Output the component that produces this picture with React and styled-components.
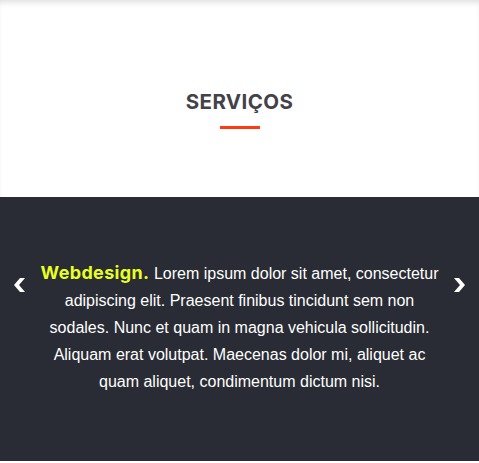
import React from "react";
import styled, { createGlobalStyle } from "styled-components";

const GlobalStyle = createGlobalStyle`
  html, body {
    margin: 0;
    padding: 0;
    background: #ffffff;
  }
  body {
    font-family: "Liberation Sans", Arial, sans-serif;
  }
`;

const Page = styled.div`
  width: 479px;
  height: 463px;
  display: flex;
  flex-direction: column;
`;

const Header = styled.section`
  height: 197px;
  display: flex;
  flex-direction: column;
  align-items: center;
  justify-content: center;
  padding-top: 22px;
  box-sizing: border-box;
  box-shadow: inset 0 5px 6px -3px rgba(0, 0, 0, 0.14);
`;

const Title = styled.h2`
  margin: 0;
  font-family: Inter, "Open Sans", sans-serif;
  font-weight: 700;
  font-size: 20.5px;
  line-height: 24px;
  letter-spacing: 0.4px;
  color: #434249;
`;

const Underline = styled.span`
  display: block;
  width: 40px;
  height: 3px;
  margin-top: 12px;
  background: #ff3b14;
`;

const Slider = styled.section`
  height: 264px;
  background: #292c34;
  display: flex;
  align-items: center;
  justify-content: center;
  padding-bottom: 4px;
  box-sizing: border-box;
`;

const Row = styled.div`
  width: 100%;
  display: flex;
  align-items: flex-start;
  justify-content: space-between;
  padding: 0 13px;
  box-sizing: border-box;
`;

const Arrow = styled.button`
  background: none;
  border: none;
  padding: 0;
  margin-top: 18px;
  width: 13px;
  height: 14px;
  display: flex;
  cursor: pointer;
`;

const Text = styled.p`
  margin: 0;
  width: 402px;
  text-align: center;
  color: #ffffff;
  font-size: 16px;
  line-height: 27px;
`;

const Highlight = styled.strong`
  font-family: Inter, "Open Sans", sans-serif;
  font-weight: 700;
  font-size: 18px;
  line-height: 20px;
  letter-spacing: 0.35px;
  color: #e8ff24;
`;

const Chevron = ({ right }) => (
  <svg width="13" height="14" viewBox="0 0 13 14">
    <polygon
      points={
        right
          ? "6,0 1,0 7,7 1,14 6,14 12,7"
          : "7,0 12,0 6,7 12,14 7,14 1,7"
      }
      fill="#ffffff"
    />
  </svg>
);

export default function App() {
  return (
    <Page>
      <GlobalStyle />
      <Header>
        <Title>SERVIÇOS</Title>
        <Underline />
      </Header>
      <Slider>
        <Row>
          <Arrow aria-label="Anterior">
            <Chevron />
          </Arrow>
          <Text>
            <Highlight>Webdesign.</Highlight> Lorem ipsum dolor sit amet,
            consectetur adipiscing elit. Praesent finibus tincidunt sem non
            sodales. Nunc et quam in magna vehicula sollicitudin. Aliquam erat
            volutpat. Maecenas dolor mi, aliquet ac quam aliquet, condimentum
            dictum nisi.
          </Text>
          <Arrow $right aria-label="Próximo">
            <Chevron right />
          </Arrow>
        </Row>
      </Slider>
    </Page>
  );
}
